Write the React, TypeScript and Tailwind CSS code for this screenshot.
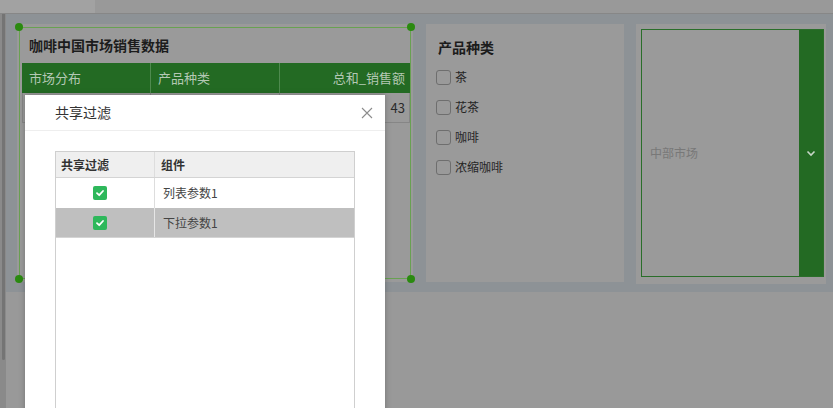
import React from "react";

const font = { fontFamily: '"Noto Sans CJK SC", "Noto Sans", sans-serif' };

function GrayBox() {
  return <span className="block w-[15px] h-[15px] rounded-[3px] border border-[#6e6e6e] bg-[#9a9a9a]" />;
}

function GreenCheck() {
  return (
    <span className="flex items-center justify-center w-[14px] h-[14px] rounded-[2px] bg-[#2eb85b]">
      <svg width="10" height="10" viewBox="0 0 10 10">
        <path d="M2 5.2 L4.2 7.2 L8 3" stroke="#fff" strokeWidth="1.8" fill="none" strokeLinecap="round" strokeLinejoin="round" />
      </svg>
    </span>
  );
}

export default function App() {
  const dot = "absolute w-[8px] h-[8px] rounded-full bg-[#2a8a10]";
  return (
    <div lang="zh-CN" className="relative w-[833px] h-[408px] overflow-hidden bg-[#999999] text-[12px]" style={font}>
      {/* top bar */}
      <div className="flex h-[14px] border-b border-[#878787]">
        <div className="w-[95px] bg-[#a2a2a2]" />
        <div className="flex-1 bg-[#999999]" />
      </div>
      <div className="flex h-[394px]">
        {/* left gutter / scrollbar */}
        <div className="w-[6px] bg-[#8a8a8a] pl-[2px]">
          <div className="w-[3px] h-[346px] bg-[#747474] rounded-b-[2px]" />
        </div>
        <div className="flex-1 flex flex-col">
          {/* canvas */}
          <div className="h-[278px] bg-[#8d9296] flex items-start pt-[10px] pl-[11px]">
            {/* widget 1: table */}
            <div className="relative w-[396px] h-[258px] bg-[#9a9a9a]">
              <div className="h-[39px] flex items-center pl-[12px] pt-[3px] font-bold text-[14px] text-[#1c1c1c]">
                咖啡中国市场销售数据
              </div>
              <div className="ml-[5px] w-[388px]">
                <div className="flex h-[30px] bg-[#236a23] text-[#b4c8b4] text-[13px]">
                  <div className="w-[129px] flex items-center pl-[7px] border-r border-[#4f8a4f]">市场分布</div>
                  <div className="w-[129px] flex items-center pl-[7px] border-r border-[#4f8a4f]">产品种类</div>
                  <div className="flex-1 flex items-center justify-end pr-[5px]">总和_销售额</div>
                </div>
                <div className="flex h-[30px] border border-t-0 border-[#868686] text-[#2a2a2a] text-[13px]">
                  <div className="w-[128px] border-r border-[#868686]" />
                  <div className="w-[129px] border-r border-[#868686]" />
                  <div className="flex-1 flex items-center justify-end pr-[4px]">43</div>
                </div>
              </div>
              {/* selection frame */}
              <div className="absolute left-[2px] top-[3px] w-[392px] h-[252px] border-[1.5px] border-[#68a152]">
                <span className={dot + " -left-[5px] -top-[5px]"} />
                <span className={dot + " -right-[5px] -top-[5px]"} />
                <span className={dot + " -left-[5px] -bottom-[5px]"} />
                <span className={dot + " -right-[5px] -bottom-[5px]"} />
              </div>
            </div>
            {/* widget 2: checkbox list */}
            <div className="ml-[13px] w-[198px] h-[258px] bg-[#9a9a9a] pt-[14px]">
              <div className="pl-[12px] h-[18px] leading-[18px] font-bold text-[14px] text-[#1c1c1c]">产品种类</div>
              <div className="mt-[6px] pl-[10px]">
                {["茶", "花茶", "咖啡", "浓缩咖啡"].map((t) => (
                  <div key={t} className="h-[30px] flex items-center gap-[4px]">
                    <GrayBox />
                    <span className="text-[#262626]">{t}</span>
                  </div>
                ))}
              </div>
            </div>
            {/* widget 3: dropdown */}
            <div className="ml-[12px] w-[190px] h-[260px] bg-[#9a9a9a] pt-[5px] pl-[5px] pr-[2px] pb-[7px]">
              <div className="h-full flex border border-[#2a6e2a]">
                <div className="flex-1 flex items-center pl-[8px] text-[#787878]">中部市场</div>
                <div className="w-[24px] bg-[#236a23] flex items-center justify-center">
                  <svg width="12" height="12" viewBox="0 0 12 12">
                    <path d="M2.5 4.5 L6 8 L9.5 4.5" stroke="#c9d6c9" strokeWidth="1.6" fill="none" />
                  </svg>
                </div>
              </div>
            </div>
          </div>
          <div className="flex-1 bg-[#999999]" />
        </div>
      </div>

      {/* dialog */}
      <div className="absolute left-[25px] top-[95px] w-[360px] h-[340px] bg-white shadow-[0_0_6px_rgba(0,0,0,0.25)]">
        <div className="h-[36px] border-b border-[#eeeeee] flex items-center justify-between pl-[30px] pr-[12px]">
          <span className="text-[14px] text-[#333333]">共享过滤</span>
          <svg width="12" height="12" viewBox="0 0 12 12">
            <path d="M1 1 L11 11 M11 1 L1 11" stroke="#8c8c8c" strokeWidth="1.1" />
          </svg>
        </div>
        <div className="pt-[20px] pl-[30px]">
          <div className="w-[300px] h-[300px] border border-[#cfcfcf]">
            <div className="flex h-[26px] bg-[#efefef] border-b border-[#d4d4d4] font-bold text-[#333333]">
              <div className="w-[99px] border-r border-[#dddddd] flex items-center pl-[5px]">共享过滤</div>
              <div className="flex-1 flex items-center pl-[6px]">组件</div>
            </div>
            <div className="flex h-[30px] text-[#444444]">
              <div className="w-[99px] border-r border-[#dddddd] flex items-center pl-[37px]">
                <GreenCheck />
              </div>
              <div className="flex-1 flex items-center pl-[8px]">列表参数1</div>
            </div>
            <div className="flex h-[30px] bg-[#bfbfbf] border-b border-[#d4d4d4] text-[#444444]">
              <div className="w-[99px] border-r border-[#e6e6e6] flex items-center pl-[37px]">
                <GreenCheck />
              </div>
              <div className="flex-1 flex items-center pl-[8px]">下拉参数1</div>
            </div>
          </div>
        </div>
      </div>
    </div>
  );
}
